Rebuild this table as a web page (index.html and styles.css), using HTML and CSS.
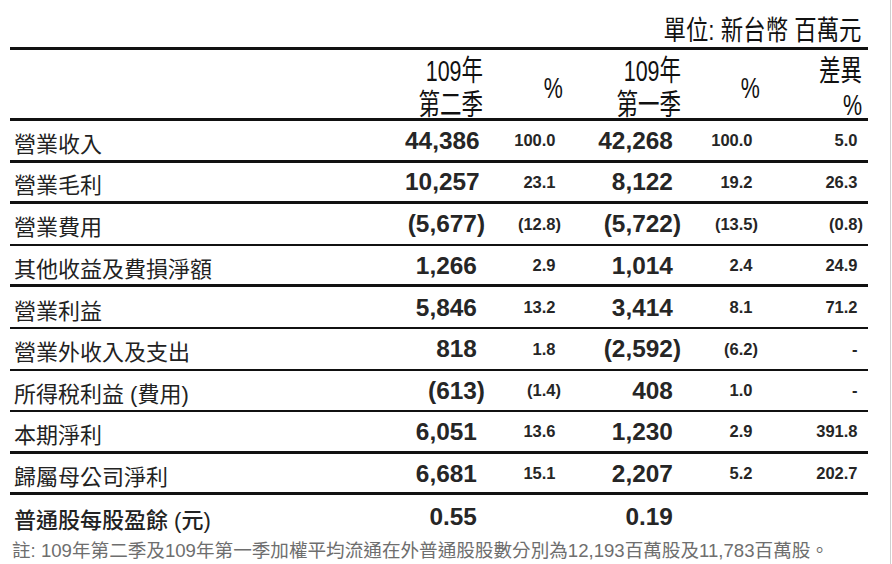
FILE: index.html
```html
<!DOCTYPE html>
<html lang="zh-Hant">
<head>
<meta charset="utf-8">
<title>損益表</title>
<link rel="stylesheet" href="styles.css">
</head>
<body>
<div class="page">
  <div class="unit"><span class="cond unit-text">單位: 新台幣 百萬元</span></div>
  <div class="table">
    <div class="row head">
      <div class="lbl"></div>
      <div class="hc c1"><span class="cond">109年<br>第二季</span></div>
      <div class="hc pc"><span class="cond">%</span></div>
      <div class="hc c3"><span class="cond">109年<br>第一季</span></div>
      <div class="hc pc"><span class="cond">%</span></div>
      <div class="hc c5"><span class="cond">差異<br>%</span></div>
    </div>
    <div class="row thick">
      <div class="lbl">營業收入</div>
      <div class="n big">44,386<span class="hp">)</span></div>
      <div class="n sm">100.0<span class="hp">)</span></div>
      <div class="n big">42,268<span class="hp">)</span></div>
      <div class="n sm">100.0<span class="hp">)</span></div>
      <div class="n sm">5.0<span class="hp">)</span></div>
    </div>
    <div class="row thick">
      <div class="lbl">營業毛利</div>
      <div class="n big">10,257<span class="hp">)</span></div>
      <div class="n sm">23.1<span class="hp">)</span></div>
      <div class="n big">8,122<span class="hp">)</span></div>
      <div class="n sm">19.2<span class="hp">)</span></div>
      <div class="n sm">26.3<span class="hp">)</span></div>
    </div>
    <div class="row thin">
      <div class="lbl">營業費用</div>
      <div class="n big">(5,677)</div>
      <div class="n sm">(12.8)</div>
      <div class="n big">(5,722)</div>
      <div class="n sm">(13.5)</div>
      <div class="n sm">(0.8)</div>
    </div>
    <div class="row thick">
      <div class="lbl">其他收益及費損淨額</div>
      <div class="n big">1,266<span class="hp">)</span></div>
      <div class="n sm">2.9<span class="hp">)</span></div>
      <div class="n big">1,014<span class="hp">)</span></div>
      <div class="n sm">2.4<span class="hp">)</span></div>
      <div class="n sm">24.9<span class="hp">)</span></div>
    </div>
    <div class="row thin">
      <div class="lbl">營業利益</div>
      <div class="n big">5,846<span class="hp">)</span></div>
      <div class="n sm">13.2<span class="hp">)</span></div>
      <div class="n big">3,414<span class="hp">)</span></div>
      <div class="n sm">8.1<span class="hp">)</span></div>
      <div class="n sm">71.2<span class="hp">)</span></div>
    </div>
    <div class="row thin">
      <div class="lbl">營業外收入及支出</div>
      <div class="n big">818<span class="hp">)</span></div>
      <div class="n sm">1.8<span class="hp">)</span></div>
      <div class="n big">(2,592)</div>
      <div class="n sm">(6.2)</div>
      <div class="n sm">-<span class="hp">)</span></div>
    </div>
    <div class="row thin">
      <div class="lbl">所得稅利益 (費用)</div>
      <div class="n big">(613)</div>
      <div class="n sm">(1.4)</div>
      <div class="n big">408<span class="hp">)</span></div>
      <div class="n sm">1.0<span class="hp">)</span></div>
      <div class="n sm">-<span class="hp">)</span></div>
    </div>
    <div class="row thick">
      <div class="lbl">本期淨利</div>
      <div class="n big">6,051<span class="hp">)</span></div>
      <div class="n sm">13.6<span class="hp">)</span></div>
      <div class="n big">1,230<span class="hp">)</span></div>
      <div class="n sm">2.9<span class="hp">)</span></div>
      <div class="n sm">391.8<span class="hp">)</span></div>
    </div>
    <div class="row thick">
      <div class="lbl">歸屬母公司淨利</div>
      <div class="n big">6,681<span class="hp">)</span></div>
      <div class="n sm">15.1<span class="hp">)</span></div>
      <div class="n big">2,207<span class="hp">)</span></div>
      <div class="n sm">5.2<span class="hp">)</span></div>
      <div class="n sm">202.7<span class="hp">)</span></div>
    </div>
    <div class="row none">
      <div class="lbl eps">普通股每股盈餘 (元)</div>
      <div class="n big">0.55<span class="hp">)</span></div>
      <div class="n sm"></div>
      <div class="n big">0.19<span class="hp">)</span></div>
      <div class="n sm"></div>
      <div class="n sm"></div>
    </div>
  </div>
  <div class="note">註: 109年第二季及109年第一季加權平均流通在外普通股股數分別為12,193百萬股及11,783百萬股。</div>
</div>
</body>
</html>
```
FILE: styles.css
```css
* { box-sizing: border-box; }
html, body { margin: 0; padding: 0; background: #fff; }
body {
  font-family: "Liberation Sans", "Noto Sans CJK TC", sans-serif;
  color: #222;
}
.page {
  width: 891px;
  height: 564px;
  overflow: hidden;
  border-right: 1px solid #cfcfcf;
  padding-left: 10px;
}
.unit {
  width: 858px;
  height: 47px;
  display: flex;
  justify-content: flex-end;
  align-items: flex-end;
  padding-right: 6px;
  padding-bottom: 1px;
  font-size: 27px;
  line-height: 30px;
  color: #111;
}
.cond {
  display: inline-block;
  transform: scaleX(0.74);
  transform-origin: right center;
  white-space: nowrap;
  text-align: right;
}
.cond.unit-text { transform: scaleX(0.83); }
.table {
  width: 858px;
  border-top: 3px solid #111;
}
.row {
  display: grid;
  grid-template-columns: 1fr 80px 76px 120px 77px 105px;
  padding-right: 5px;
  height: 41.6px;
  align-items: center;
}
.row.thick { border-bottom: 3px solid #111; }
.row.thin { border-bottom: 2px solid #111; }
.row.head {
  height: 71px;
  padding-top: 4px;
  border-bottom: 3px solid #111;
  font-size: 29px;
  line-height: 34px;
  color: #111;
}
.hc {
  display: flex;
  justify-content: flex-end;
}
.hc.c1 { margin-right: 2px; }
.hc.pc { margin-right: -2px; }
.hc.c3 { margin-right: 0; }
.hc.c5 { margin-right: 1px; }
.lbl {
  font-size: 22px;
  padding-left: 4px;
  padding-top: 3px;
  white-space: nowrap;
}
.lbl.eps { font-weight: 500; }
.n {
  text-align: right;
  font-weight: bold;
  white-space: nowrap;
  padding-top: 1px;
  color: #262626;
}
.n.big { font-size: 24.4px; }
.n.sm { font-size: 16.5px; }
.hp { visibility: hidden; }
.note {
  margin-top: 3px;
  padding-left: 2px;
  font-size: 18.6px;
  line-height: 22px;
  color: #6e6e6e;
  white-space: nowrap;
}
```
